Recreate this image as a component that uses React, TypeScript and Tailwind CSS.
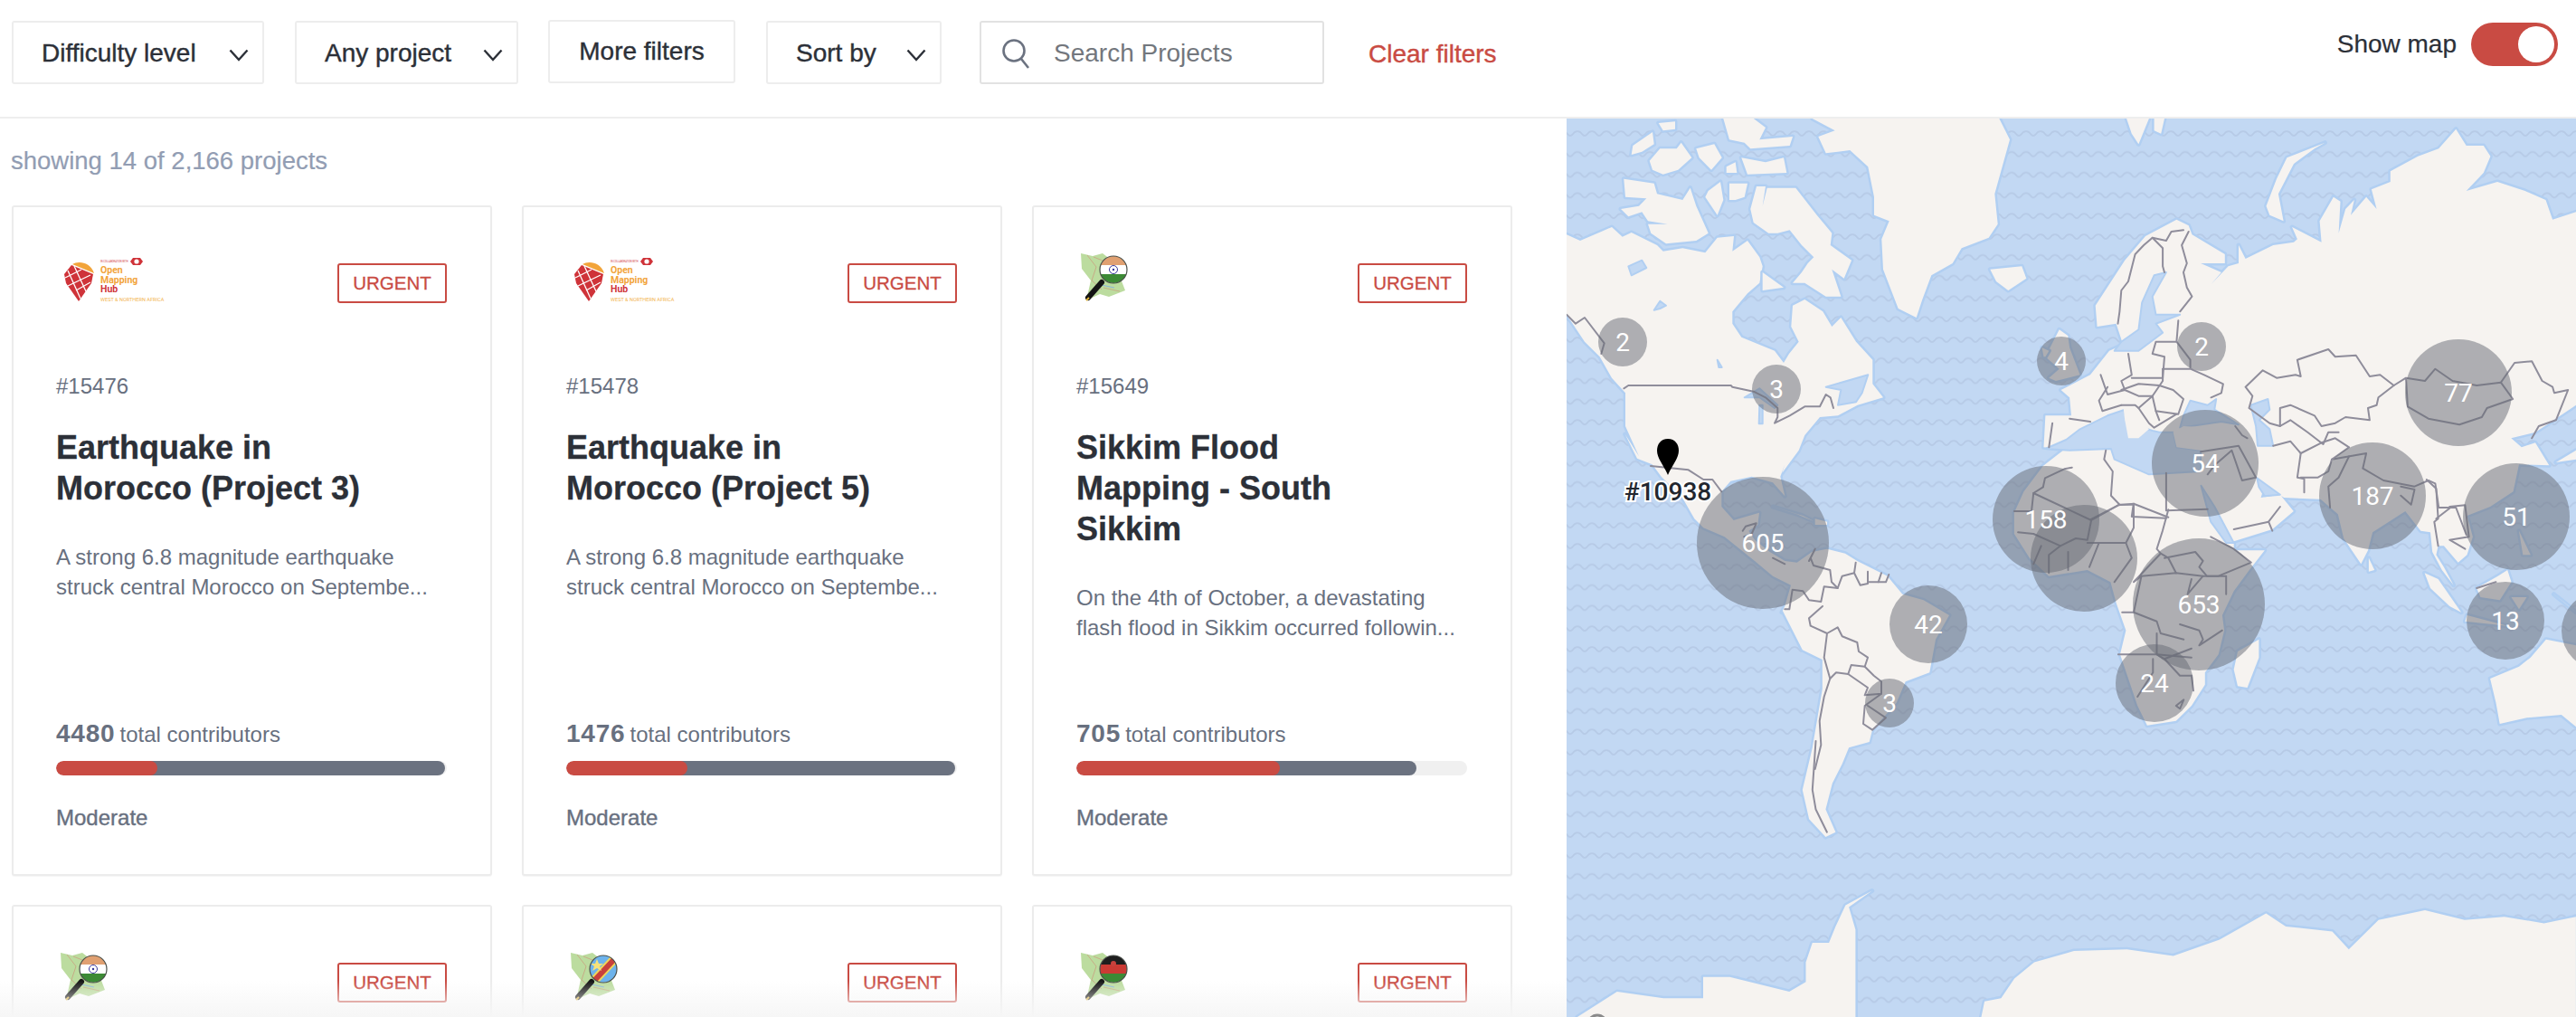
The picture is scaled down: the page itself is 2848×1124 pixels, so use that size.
import React from "react";

type Z = "a" | "b" | "c" | "d" | "e";
const ZOOMS: Record<Z, [number, number, number, number]> = {
  a: [1732, 3, 131, 3],
  b: [2250, 2.622, 131, 3],
  c: [2180, 2.347, 480, 3],
  d: [1760, 3, 480, 3],
  e: [1700, 1.366, 560, 2.78],
};
function pts(z: Z, s: string): string[] {
  const [ox, sx, oy, sy] = ZOOMS[z];
  return s.trim().split(/\s+/).map((p) => {
    const [x, y] = p.split(",").map(Number);
    return `${(ox + x / sx).toFixed(1)} ${(oy + y / sy).toFixed(1)}`;
  });
}
function shape(...segs: [Z, string][]) {
  const all = segs.flatMap(([z, s]) => pts(z, s));
  return "M" + all.join("L") + "Z";
}
function line(z: Z, s: string) {
  return "M" + pts(z, s).join("L");
}

const LAND = [
  shape(
    ["a", "0,385 45,405 150,360 185,392 215,378 300,420 320,440 385,430 460,445 500,395 555,390 550,440 600,405 640,460 650,490 640,545 600,580 550,640 550,680 580,725 690,770 720,810 738,780 770,740 745,690 750,620 790,600 850,640 880,690 910,660 960,740 1015,800 1015,880 1050,925 965,950 900,985 840,990 790,1050 770,1100 715,1175"],
    ["d", "640,100 625,140 640,205 600,160 530,140 460,155 430,190 430,240 470,285 555,260 550,300 520,320 540,350 590,390 640,420 680,425 730,390 780,380 840,395 880,420 980,470 1030,530 1100,550 1185,600 1140,680 1120,790 1040,820 1010,890 930,980 920,1020"],
    ["e", "470,740 460,790 445,850 435,930 450,1000 435,1015 410,960 400,870 415,740 430,560 430,470 400,440 370,320"],
    ["d", "630,590 640,570 660,500 600,470 540,420 440,340 370,310 340,280 300,210 230,140 200,100 150,80 110,0"],
    ["a", "240,1120 195,1020 195,910 150,860 110,790 60,740 0,650"]
  ),
  shape(["a", "815,0 890,40 835,60 860,115 940,105 1000,160 1020,260 1020,320 1070,340 1045,400 1050,500 1100,630 1160,660 1180,600 1210,520 1280,480 1310,430 1400,395 1430,350 1420,250 1470,70 1435,0"]),
  shape(["a", "190,200 290,215 300,250 385,270 410,230 430,290 470,380 430,405 330,415 280,380 270,350 335,350 270,340 250,310 205,325 180,300 240,290 265,265 195,260"]),
  shape(["a", "470,240 510,210 520,270 500,320 460,260"]),
  shape(["a", "540,215 600,215 590,260 560,270 540,270"]),
  shape(["a", "610,300 630,225 660,225 650,290 665,230 760,230 830,320 880,380 875,420 945,470 920,530 880,500 910,590 860,590 790,545 750,545 780,510 800,480 820,460 780,420 740,370 700,380 670,380 620,345"]),
  shape(["a", "275,140 310,100 365,100 380,80 415,130 370,170 320,185 285,170"]),
  shape(["a", "430,100 490,85 515,130 480,170 440,130"]),
  shape(["a", "530,160 560,145 565,180 530,180"]),
  shape(["a", "540,70 590,80 610,100 740,90 750,60 640,70 660,30 620,0 520,0"]),
  shape(["a", "580,130 660,145 720,130 730,180 600,185"]),
  shape(["a", "305,15 360,10 360,35 320,40"]),
  shape(["a", "220,90 285,45 290,85 250,110 215,120"]),
  shape(["a", "650,510 720,560 650,570"]),
  shape(["a", "1405,500 1510,490 1525,530 1465,570 1425,540"]),
  shape(
    ["b", "175,620 260,470 320,390 410,335 445,355 455,385 550,450 550,480 480,480 540,510 510,550 560,490 590,480 590,420 610,465 690,420 750,410 760,400 745,360 830,410 825,340 865,260 885,275 880,380 900,300 925,270 915,320 960,260 990,300 975,235 1030,210 1030,175 1110,125 1170,100 1220,35 1250,90 1300,90 1320,125 1300,180 1250,240 1340,210 1420,240 1480,270 1500,335 1568,310 1568,950 1490,1010 1450,1040 1380,1060 1410,1090 1450,1075 1490,1150"],
    ["c", "1420,100 1405,190 1345,240 1285,270 1300,340 1285,400 1262,425 1225,370 1210,370 1205,400 1225,440 1250,500 1220,450 1195,390 1190,325 1165,320 1125,255 1040,325 1028,385 1010,430 965,345 950,265 905,215 810,210 760,170 750,210 800,200 835,255 780,315 680,355 680,385 760,385 720,450 680,520 650,600 655,650 640,730 605,790 605,830 570,900 530,950 455,965 430,900 385,730 400,650 375,560 360,490 300,450 200,470 150,410 110,330 110,260 135,190 185,105 240,50"],
    ["b", "25,1090 30,985 105,985 100,925 75,900 160,850 215,770 255,750 235,680 180,690"]
  ),
  shape(["e", "505,1180 465,1225 450,1290 440,1340 415,1340 405,1400 405,1460 380,1490 290,1445 250,1445 250,1510 190,1510 120,1490 60,1568 480,1568 480,1300 470,1230"]),
  shape(["e", "670,1568 675,1520 700,1510 720,1450 750,1400 810,1365 890,1360 960,1380 1030,1330 1100,1250 1130,1290 1200,1305 1225,1360 1270,1270 1340,1240 1400,1270 1460,1260 1520,1280 1568,1260 1568,1568"]),
  shape(["c", "1345,810 1420,770 1450,740 1490,680 1568,700 1568,970 1530,930 1440,940 1370,960 1360,890"]),
  shape(["c", "1175,460 1210,480 1270,590 1240,570 1190,510"]),
  shape(["c", "1285,600 1390,635 1280,620"]),
  shape(["c", "1310,510 1365,470 1390,450 1400,490 1370,550 1320,540"]),
  shape(["c", "1400,540 1440,540 1420,580"]),
  shape(["c", "1420,320 1450,400 1430,400"]),
  shape(["c", "1510,530 1568,590 1540,560"]),
  shape(["c", "1030,410 1045,450 1030,455"]),
  shape(["c", "745,680 745,740 715,840 690,835 680,780 690,720"]),
  shape(["b", "1568,1100 1510,1140 1568,1130"]),
  shape(["d", "600,240 700,270 740,290 680,265"]),
  shape(["d", "740,280 780,290 780,300 740,300"]),
  shape(["b", "70,700 95,720 100,760 130,850 60,870 40,860 70,830 30,790"]),
  shape(["b", "25,790 20,760 40,770 30,790"]),
  shape(["b", "265,0 330,0 300,85 280,50"]),
  shape(["b", "345,0 375,0 365,50 345,40"]),
  shape(["b", "840,80 810,100 750,150 705,250 720,340 680,320 670,290 700,200 730,130"]),
];

const WATER = [
  shape(["b", "345,520 380,510 340,590 350,650 420,650 350,680 370,710 300,770 230,770 250,740 300,700 310,610"]),
  shape(["b", "30,1095 90,1065 130,1030 210,985 260,965 300,1020 340,1035 360,1040 400,1040 410,1090 480,1100 480,1170 330,1180 230,1130 220,1095 100,1100"]),
  shape(["b", "420,1025 430,985 450,935 500,950 525,930 520,965 590,1015 540,1005"]),
  shape(["b", "625,950 675,930 680,965 650,1000 680,1030 690,1085 645,1085 640,1020"]),
  shape(["c", "595,170 630,240 680,360 660,360 620,290"]),
  shape(["c", "740,145 800,200 760,205 745,175"]),
  shape(["a", "640,950 650,950 650,1012 638,1012"]),
  shape(["a", "590,925 640,895 700,950 690,960 640,925"]),
  shape(["a", "500,800 515,825 505,825"]),
  shape(["a", "290,635 310,605 330,620 310,630"]),
  shape(["a", "205,490 250,470 265,495 215,520"]),
  shape(["a", "860,890 1000,850 980,910 960,940 900,950 910,900"]),
];
const ITALY = shape(["b", "255,950 330,1030 300,1060 270,1060 260,1000"]);
const TURKEY = shape(["b", "400,1040 430,1020 590,1030 600,1080 480,1100 410,1090"]);

const BORDERS = [
  line("a", "0,650 30,680 60,660 125,745 115,780"),
  line("a", "190,895 205,885 545,885 550,890 620,905 660,925 700,960 700,990 690,1010 740,985 790,955 840,955 860,915 875,925 885,960"),
  line("d", "195,105 320,118 370,150 400,150 430,190"),
  line("d", "500,320 510,305 545,295 530,330 505,340"),
  line("d", "600,410 640,430"),
  line("d", "720,420 740,380 725,410 735,435 790,450 795,490 815,510 830,470 870,460 875,425"),
  line("d", "870,460 890,500 915,495 915,455"),
  line("d", "915,490 975,490 985,465"),
  line("d", "960,460 950,490"),
  line("d", "640,580 655,580 665,515 700,520 720,550 760,555 770,505 815,510"),
  line("d", "765,570 720,610 725,635 780,660 815,640 830,670 880,690 885,720 915,740 905,770 860,765 850,795 810,790 790,810 770,740 780,660"),
  line("d", "850,795 915,840 905,865 960,860 960,820 935,800 905,770"),
  line("d", "915,900 975,940 930,980 900,960 905,900 960,860"),
  line("d", "790,810 770,870 755,950 760,1030 740,1110"),
  line("e", "420,720 415,870 420,930 437,1000"),
  line("b", "430,370 395,375 380,405 340,395 315,420 290,450 270,540 250,570 245,640 240,680"),
  line("b", "340,395 370,430 370,490 375,510"),
  line("b", "445,375 425,420 440,480 430,510 440,560 455,590 420,640"),
  line("b", "415,670 410,740 350,740 340,780 375,790 370,860 280,860"),
  line("b", "270,780 280,850 250,870 260,900 210,915 190,850"),
  line("b", "410,740 450,800 450,830 370,830 450,830 490,850 545,880 540,910 510,925"),
  line("b", "370,830 370,870 340,920"),
  line("b", "210,890 185,935 195,970 250,950"),
  line("b", "250,900 300,880 360,885 400,900 430,930 415,980 350,970 340,920 300,960 290,950 250,950"),
  line("b", "300,960 330,1010 345,1025 410,980"),
  line("b", "350,970 360,1000"),
  line("b", "260,900 300,920 340,920"),
  line("b", "100,995 160,1005"),
  line("b", "50,1010 40,1090"),
  line("b", "610,890 660,835 700,860 755,850 770,855 760,800 850,765 870,790 930,785 970,855 1000,850 1040,885 995,925 990,950 965,960 970,1000 900,990 870,1010 830,1020 810,985 740,950 710,960 710,1020 680,1010 620,960 630,920 610,890"),
  line("b", "710,1020 740,1000 790,1040 835,1080 850,1040 880,1040"),
  line("b", "690,1085 740,1070 770,1110 760,1190 780,1195 780,1240"),
  line("b", "770,1110 830,1075 870,1060 910,1090 860,1130 850,1170 820,1190 770,1190"),
  line("b", "1040,885 1075,860 1130,870 1160,830 1210,870 1280,885 1350,875 1385,930 1310,960 1295,990 1230,1015 1140,995 1080,955 1075,860"),
  line("b", "1350,875 1390,810 1440,805 1470,870 1500,890 1505,910 1545,900 1510,1000 1460,1020 1440,1060"),
  line("b", "860,1130 960,1110 950,1160 1010,1200 1100,1220 1140,1200 1160,1210 1170,1290 1220,1290 1250,1380"),
  line("b", "910,1120 880,1190 850,1220 855,1290"),
  line("b", "1060,1220 1100,1230 1090,1280 1060,1250"),
  line("b", "380,1175 380,1300 500,1295"),
  line("b", "480,1105 590,1085 640,1190 600,1200 570,1100 520,1150 500,1180"),
  line("b", "580,1020 600,1050 615,1060"),
  line("b", "205,1100 200,1130 225,1170 220,1250 245,1280 160,1330"),
  line("b", "245,1280 285,1280 280,1320 380,1325"),
  line("c", "800,240 770,290 680,315"),
  line("c", "770,290 780,320"),
  line("c", "185,175 190,145 240,115 260,110"),
  line("c", "160,195 310,285 380,235 420,230 510,275"),
  line("c", "185,175 160,195 155,255 110,255"),
  line("c", "310,285 300,350 270,345 230,370 160,330 120,325"),
  line("c", "340,360 300,360"),
  line("c", "420,230 420,310 400,360 330,360 305,440"),
  line("c", "230,370 200,400 200,460"),
  line("c", "180,370 160,430"),
  line("c", "250,390 250,450"),
  line("c", "400,360 415,410 370,490"),
  line("c", "510,250 495,320 480,380 490,395 420,490 440,470 530,460 600,470 640,470 725,425 680,380 620,340"),
  line("c", "490,395 510,410 530,460"),
  line("c", "500,410 580,390 600,420 590,440 610,470 660,470 660,530"),
  line("c", "420,590 480,620 490,660 550,680"),
  line("c", "440,470 420,590 390,590"),
  line("c", "570,480 560,530 600,470"),
  line("c", "380,730 480,730 570,740"),
  line("c", "480,660 480,730 500,745 570,710"),
  line("c", "540,630 590,650 600,680 590,700 650,650"),
  line("c", "470,745 470,790 430,870"),
  line("c", "570,800 575,850"),
  line("c", "530,900 550,880 540,910 530,900"),
  line("c", "500,745 540,800 570,800"),
  line("c", "1180,150 1205,180 1210,280 1200,290 1210,370"),
  line("c", "1240,240 1280,235 1290,340 1240,350 1280,380"),
  line("c", "1205,280 1240,245"),
  line("c", "1310,510 1360,490"),
];

const CLUSTERS: [number, number, number, string][] = [
  [1794, 378, 27, "2"],
  [1964, 430, 27, "3"],
  [2279, 399, 27, "4"],
  [2434, 383, 27, "2"],
  [2718, 434, 59, "77"],
  [2438, 512, 59, "54"],
  [2623, 548, 59, "187"],
  [2782, 571, 59, "51"],
  [2304, 617, 59, ""],
  [2262, 574, 59, "158"],
  [1949, 600, 73, "605"],
  [2431, 668, 73, "653"],
  [2132, 690, 43, "42"],
  [2089, 777, 27, "3"],
  [2382, 755, 43, "24"],
  [2770, 686, 43, "13"],
  [2875, 697, 43, ""],
];

function WorldMap() {
  return (
    <svg className="block h-full w-full" viewBox="1732 131 1116 993" preserveAspectRatio="none">
      <defs>
        <pattern id="waves" patternUnits="userSpaceOnUse" x="1744" y="138" width="32" height="22.8">
          <path d="M0 7Q3 7 5 10Q8 14 11 10Q13 7 16 7Q19 7 21 10Q24 14 27 10Q29 7 32 7" fill="none" stroke="#b6cae6" strokeWidth="1.8" />
        </pattern>
        <clipPath id="mapclip">
          <rect x="1732" y="131" width="1116" height="993" />
        </clipPath>
      </defs>
      <g clipPath="url(#mapclip)">
        <rect x="1732" y="131" width="1116" height="993" fill="#c2d8f3" />
        <rect x="1732" y="131" width="1116" height="993" fill="url(#waves)" />
        {LAND.map((d, i) => (
          <path key={i} d={d} fill="#f6f3f0" stroke="#b1cff2" strokeWidth="5" strokeLinejoin="round" paintOrder="stroke" />
        ))}
        {WATER.map((d, i) => (
          <path key={i} d={d} fill="#c2d8f3" stroke="#b1cff2" strokeWidth="2" strokeLinejoin="round" />
        ))}
        <path d={ITALY} fill="#f6f3f0" />
        <path d={TURKEY} fill="#f6f3f0" />
        {BORDERS.map((d, i) => (
          <path key={i} d={d} fill="none" stroke="#8f8d9b" strokeWidth="2" strokeLinejoin="round" strokeLinecap="round" />
        ))}
        {CLUSTERS.map(([x, y, r], i) => (
          <circle key={i} cx={x} cy={y} r={r} fill="#666a74" fillOpacity="0.5" />
        ))}
        {CLUSTERS.map(([x, y, , t], i) =>
          t ? (
            <text key={i} x={x} y={y + 10} textAnchor="middle" fill="#fff" fontFamily="Roboto, sans-serif" fontSize="28">
              {t}
            </text>
          ) : null
        )}
        <path d="M1844 485C1836 485 1832 491 1832 498C1832 507 1840 515 1844 525C1848 515 1856 507 1856 498C1856 491 1852 485 1844 485Z" fill="#000" />
        <text x="1844" y="553" textAnchor="middle" fill="#23272f" stroke="#fff" strokeWidth="4" paintOrder="stroke" fontFamily="Roboto, sans-serif" fontSize="28" fontWeight="500">
          #10938
        </text>
        <circle cx="1766" cy="1132" r="10" fill="none" stroke="#8a8a8a" strokeWidth="3" />
      </g>
    </svg>
  );
}

function Chevron({ className }: { className?: string }) {
  return (
    <svg className={className} width="22" height="14" viewBox="0 0 22 14" fill="none">
      <path d="M1.5 1.5L11 12L20.5 1.5" stroke="#2c3038" strokeWidth="2.4" />
    </svg>
  );
}

function FilterButton({ label, w, chevron, chevronGap }: { label: string; w: string; chevron?: boolean; chevronGap?: string }) {
  return (
    <div className={`${w} flex h-[70px] shrink-0 items-center rounded-[3px] border-2 border-[#ededed] pl-[31px] pt-[2px] text-[28px] text-[#2c3038] [-webkit-text-stroke:0.4px]`}>
      <span className="whitespace-nowrap">{label}</span>
      {chevron ? <Chevron className={`${chevronGap} mt-[4px] shrink-0`} /> : null}
    </div>
  );
}

function OmhLogo() {
  return (
    <svg width="125" height="60" viewBox="0 0 125 60" className="-mt-[3px] ml-[8px] self-start">
      <path d="M10 17C16 13 30 14 34 27Z" fill="#f2a43a" />
      <path d="M1 28L9 18L33 28L31 38L17 58L3 38Z" fill="#cf3339" />
      <path d="M2 32L20 23M5 41L30 29M12 19L25 47M5 24L19 55M14 46L30 37" stroke="#fff" strokeWidth="1.3" fill="none" />
      <text x="41" y="27" fontSize="10.5" fontWeight="700" fill="#f2a43a" fontFamily="Roboto, sans-serif">Open</text>
      <text x="41" y="38" fontSize="10.5" fontWeight="700" fill="#f2a43a" fontFamily="Roboto, sans-serif">Mapping</text>
      <text x="41" y="48" fontSize="10.5" fontWeight="700" fill="#cf3339" fontFamily="Roboto, sans-serif">Hub</text>
      <text x="41" y="58" fontSize="5.6" fill="#f2b44f" fontFamily="Roboto, sans-serif">WEST &amp; NORTHERN AFRICA</text>
      <text x="41" y="15" fontSize="2.6" fill="#cf3339" fontFamily="Roboto, sans-serif">IN COLLABORATION WITH</text>
      <path d="M74 14L77 10L85 10L88 14L85 18L77 18Z" fill="#cf3339" />
      <circle cx="81" cy="14" r="2.6" fill="#fff" />
    </svg>
  );
}

function OsmLogo({ flag }: { flag: "india" | "drc" | "malawi" }) {
  const id = `flag-${flag}`;
  return (
    <svg width="60" height="60" viewBox="15 15 60 60" className="-mt-[3px] ml-px self-start">
      <defs>
        <clipPath id={id}>
          <circle cx="55" cy="38" r="15" />
        </clipPath>
      </defs>
      <path d="M19 20L32 23L43 20L56 30L68 61L50 68L40 65L25 72L30 50L20 37Z" fill="#bcdc9f" />
      <path d="M26 22L36 35L31 50L42 60M44 58L62 62M33 24L48 30" stroke="#c9a080" strokeWidth="0.8" fill="none" />
      <path d="M42 55L56 58" stroke="#8fb4d8" strokeWidth="1.2" fill="none" />
      <path d="M42 52L27 69" stroke="#141414" strokeWidth="6" strokeLinecap="round" />
      <path d="M28 69L25 72" stroke="#e0b437" strokeWidth="2" />
      <g clipPath={`url(#${id})`}>
        <rect x="38" y="22" width="34" height="32" fill="#fff" />
        {flag === "india" && (
          <>
            <rect x="38" y="22" width="34" height="11" fill="#e0a071" />
            <rect x="38" y="43" width="34" height="11" fill="#3c8a35" />
            <circle cx="55" cy="38" r="4.5" fill="none" stroke="#39399b" strokeWidth="1" />
            <circle cx="55" cy="38" r="1.2" fill="#39399b" />
          </>
        )}
        {flag === "drc" && (
          <>
            <rect x="38" y="22" width="34" height="32" fill="#6db3ec" />
            <path d="M42 54L70 24" stroke="#f0d75a" strokeWidth="10" />
            <path d="M42 54L70 24" stroke="#c8413c" strokeWidth="6" />
            <path d="M48 27L50 32L55 32L51 35L53 40L48 37L43 40L45 35L41 32L46 32Z" fill="#f6e27a" />
          </>
        )}
        {flag === "malawi" && (
          <>
            <rect x="38" y="22" width="34" height="11" fill="#1e1e1e" />
            <rect x="38" y="33" width="34" height="10" fill="#cb3a34" />
            <rect x="38" y="43" width="34" height="11" fill="#3c8a35" />
            <circle cx="55" cy="32" r="3" fill="#c8413c" />
          </>
        )}
      </g>
      <circle cx="55" cy="38" r="15" fill="none" stroke="#4a4f4a" strokeWidth="1.2" />
    </svg>
  );
}

type CardProps = {
  logo: React.ReactNode;
  id?: string;
  title?: string[];
  desc?: string[];
  count?: string;
  red?: string;
  gray?: string;
};

function Card({ logo, id, title, desc, count, red, gray }: CardProps) {
  return (
    <div className="flex h-[741px] flex-col rounded-[3px] border-2 border-[#ececec] bg-white pb-[46px] pl-[47px] pr-[47px] pt-[49px] shadow-[0_1px_1px_rgba(0,0,0,0.04)]">
      <div className="flex h-[57px] shrink-0 items-end justify-between">
        {logo}
        <span className="mr-px flex h-[44px] w-[121px] items-center justify-center rounded-[3px] border-2 border-[#c94b43] text-[20.5px] leading-none text-[#c94b43] [-webkit-text-stroke:0.3px]">
          URGENT
        </span>
      </div>
      {id ? (
        <>
          <div className="mt-[76px] text-[24px] leading-[32px] text-[#68707f]">{id}</div>
          <h3 className="mt-[29px] text-[36px] font-bold leading-[45px] text-[#2c3038] [-webkit-text-stroke:0.3px]">
            {title?.map((t) => (
              <span key={t} className="block whitespace-nowrap">{t}</span>
            ))}
          </h3>
          <p className="mt-[37px] text-[24px] leading-[33px] text-[#68707f]">
            {desc?.map((t) => (
              <span key={t} className="block whitespace-nowrap">{t}</span>
            ))}
          </p>
          <div className="mt-auto">
            <div className="text-[24px] leading-[36px] text-[#68707f]">
              <span className="mr-[5px] text-[28px] font-bold tracking-[0.8px]">{count}</span>total contributors
            </div>
            <div className="mt-[11px] flex h-[16px] w-[432px] overflow-hidden rounded-full bg-[#f0f0f0]">
              <div className={`${red} relative z-10 h-full rounded-full bg-[#c94b43]`} />
              <div className={`${gray} -ml-[8px] h-full rounded-r-full bg-[#6b7280]`} />
            </div>
            <div className="mt-[31px] text-[24px] leading-[32px] text-[#68707f] [-webkit-text-stroke:0.4px]">Moderate</div>
          </div>
        </>
      ) : null}
    </div>
  );
}

export default function App() {
  return (
    <div className="flex h-[1124px] w-[2848px] flex-col overflow-hidden bg-white font-['Liberation_Sans',Arial,sans-serif]">
      <header className="flex h-[131px] shrink-0 items-start border-b-2 border-[#eeeeee] pl-[13px] pr-[20px] pt-[23px]">
        <FilterButton label="Difficulty level" w="w-[279px]" chevron chevronGap="ml-[36px]" />
        <div className="ml-[34px]">
          <FilterButton label="Any project" w="w-[247px]" chevron chevronGap="ml-[35px]" />
        </div>
        <div className="-mt-px ml-[33px]">
          <div className="flex h-[70px] w-[207px] items-center justify-center rounded-[3px] border-2 border-[#ededed] text-[28px] text-[#2c3038] [-webkit-text-stroke:0.4px]">
            More filters
          </div>
        </div>
        <div className="ml-[34px]">
          <FilterButton label="Sort by" w="w-[194px]" chevron chevronGap="ml-[33px]" />
        </div>
        <div className="ml-[42px] flex h-[70px] w-[381px] items-center rounded-[3px] border-2 border-[#e2e2e2] pl-[22px] pt-[2px]">
          <svg width="32" height="34" viewBox="0 0 32 34" fill="none">
            <circle cx="14" cy="14" r="11.5" stroke="#6b7280" strokeWidth="2.6" />
            <path d="M22 23L30 33" stroke="#6b7280" strokeWidth="2.6" />
          </svg>
          <span className="ml-[26px] text-[28px] text-[#73777d]">Search Projects</span>
        </div>
        <div className="ml-[49px] flex h-[74px] items-center text-[28px] text-[#c94b43] [-webkit-text-stroke:0.4px]">Clear filters</div>
        <div className="ml-auto flex h-[51px] items-center">
          <span className="text-[28px] text-[#2c3038] [-webkit-text-stroke:0.2px]">Show map</span>
          <div className="ml-[16px] flex h-[48px] w-[96px] items-center justify-end rounded-full bg-[#c94b43] pr-[4px]">
            <div className="h-[40px] w-[40px] rounded-full bg-white" />
          </div>
        </div>
      </header>
      <main className="flex min-h-0 flex-1">
        <section className="relative w-[1732px] shrink-0 overflow-hidden pl-[12px] pr-[60px] pt-[30px]">
          <div className="text-[27.5px] leading-[34px] text-[#929db3] [-webkit-text-stroke:0.2px]">showing 14 of 2,166 projects</div>
          <div className="ml-px mt-[32px] grid grid-cols-[531px_531px_531px] gap-x-[33px] gap-y-[32px]">
            <Card
              logo={<OmhLogo />}
              id="#15476"
              title={["Earthquake in", "Morocco (Project 3)"]}
              desc={["A strong 6.8 magnitude earthquake", "struck central Morocco on Septembe..."]}
              count="4480"
              red="w-[26%]"
              gray="w-[calc(73.5%+8px)]"
            />
            <Card
              logo={<OmhLogo />}
              id="#15478"
              title={["Earthquake in", "Morocco (Project 5)"]}
              desc={["A strong 6.8 magnitude earthquake", "struck central Morocco on Septembe..."]}
              count="1476"
              red="w-[31%]"
              gray="w-[calc(68.5%+8px)]"
            />
            <Card
              logo={<OsmLogo flag="india" />}
              id="#15649"
              title={["Sikkim Flood", "Mapping - South", "Sikkim"]}
              desc={["On the 4th of October, a devastating", "flash flood in Sikkim occurred followin..."]}
              count="705"
              red="w-[52%]"
              gray="w-[calc(35%+8px)]"
            />
            <Card logo={<OsmLogo flag="india" />} />
            <Card logo={<OsmLogo flag="drc" />} />
            <Card logo={<OsmLogo flag="malawi" />} />
          </div>
          <div className="pointer-events-none absolute bottom-0 left-0 right-0 h-[40px] bg-gradient-to-b from-transparent to-[#f6f6f6]" />
        </section>
        <section className="min-w-0 flex-1">
          <WorldMap />
        </section>
      </main>
    </div>
  );
}
